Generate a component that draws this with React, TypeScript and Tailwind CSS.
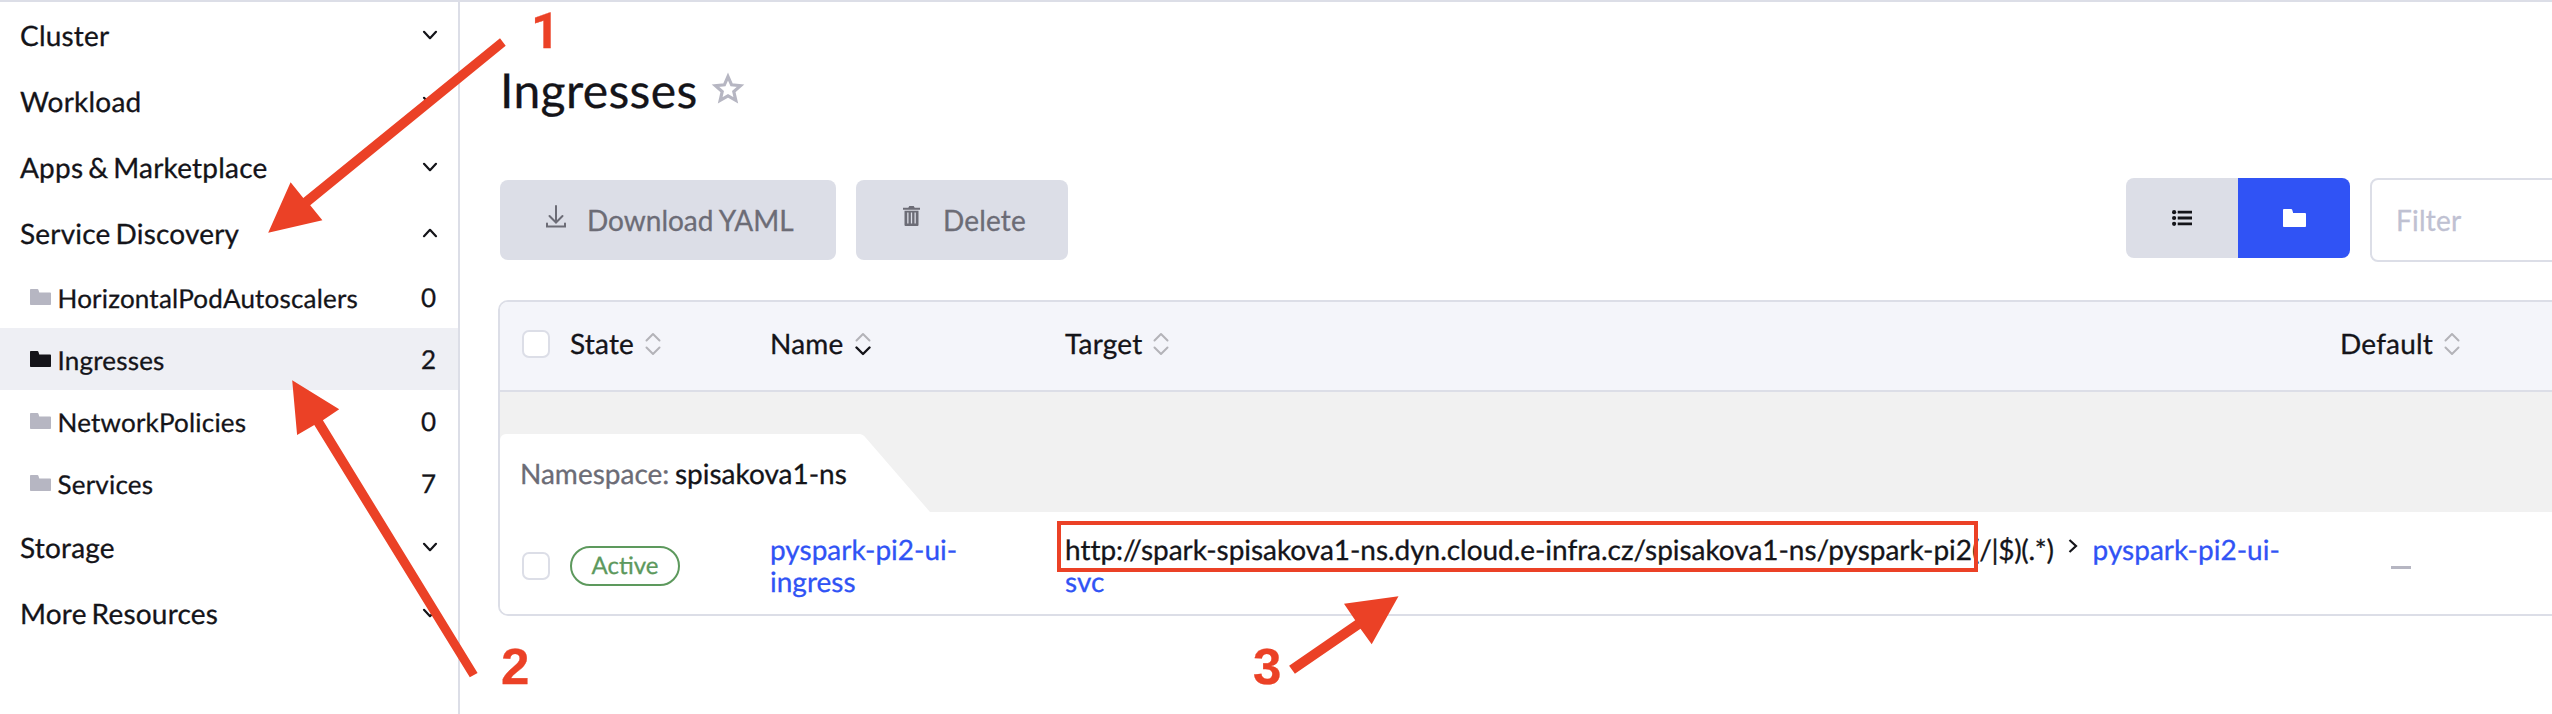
import React from "react";

type Group = {
  label: string;
  open?: boolean;
  children?: { label: string; count: number; active?: boolean }[];
};

const groups: Group[] = [
  { label: "Cluster" },
  { label: "Workload" },
  { label: "Apps & Marketplace" },
  {
    label: "Service Discovery",
    open: true,
    children: [
      { label: "HorizontalPodAutoscalers", count: 0 },
      { label: "Ingresses", count: 2, active: true },
      { label: "NetworkPolicies", count: 0 },
      { label: "Services", count: 7 },
    ],
  },
  { label: "Storage" },
  { label: "More Resources" },
];

function Chevron({ up = false, className = "" }: { up?: boolean; className?: string }) {
  return (
    <svg
      className={className}
      width="16"
      height="10"
      viewBox="0 0 16 10"
      fill="none"
      stroke="currentColor"
      strokeWidth="2.2"
      strokeLinecap="round"
      strokeLinejoin="round"
    >
      <path d={up ? "M2 8.2 8 1.8l6 6.4" : "M2 1.8 8 8.2l6-6.4"} />
    </svg>
  );
}

function Folder({ className = "" }: { className?: string }) {
  return (
    <svg className={className} viewBox="0 0 24 18" fill="currentColor" preserveAspectRatio="none">
      <path d="M1.2 0h7.2c.6 0 1 .3 1.2.8L10.6 4H22.8c.7 0 1.2.5 1.2 1.1v11.8c0 .6-.5 1.1-1.2 1.1H1.2C.5 18 0 17.5 0 16.900V1.100C0 .5.500 0 1.200 0Z" />
    </svg>
  );
}

function Sort({ desc = false }: { desc?: boolean }) {
  return (
    <svg
      width="16"
      height="24"
      viewBox="0 0 16 24"
      fill="none"
      strokeWidth="2"
      strokeLinecap="round"
      strokeLinejoin="round"
    >
      <path d="M1.500 8.500 8 2l6.500 6.500" stroke="#b3b3b8" />
      <path d="M1.500 15.500 8 22l6.500-6.500" stroke={desc ? "#141419" : "#b3b3b8"} strokeWidth={desc ? 2.400 : 2} />
    </svg>
  );
}

function Checkbox() {
  return <span className="block size-7 shrink-0 rounded-[7px] border-2 border-[#dcdee7] bg-white" />;
}

function Sidebar() {
  return (
    <nav className="w-[460px] shrink-0 border-r-2 border-[#dcdee7]">
      {groups.map((g) => (
        <div key={g.label}>
          <div className="flex h-[66px] items-center justify-between pr-5 pl-5">
            <span className="text-[28px] leading-8 tracking-[0.2px] [word-spacing:-2.4px]">{g.label}</span>
            <Chevron up={g.open} className="mb-px" />
          </div>
          {g.children?.map((c) => (
            <div
              key={c.label}
              className={
                c.active
                  ? "flex h-[62px] items-center bg-[#eeeff4] pr-[22px] pl-[30px]"
                  : "flex h-[62px] items-center pr-[22px] pl-[30px]"
              }
            >
              <Folder
                className={
                  c.active ? "mb-[1px] h-4 w-[21px] text-[#141419]" : "mb-[1px] h-4 w-[21px] text-[#b6b6c2]"
                }
              />
              <span className="ml-[6.5px] grow pt-[2px] text-[26px] leading-8 tracking-[0.2px]">{c.label}</span>
              <span className="text-[26px] leading-8">{c.count}</span>
            </div>
          ))}
        </div>
      ))}
    </nav>
  );
}

function Toolbar() {
  return (
    <div className="flex items-start">
      <button className="mt-[2px] ml-[2px] flex h-20 w-[336px] shrink-0 items-center rounded-lg bg-[#dcdee7] pl-[46px] text-[28px] whitespace-nowrap text-[#6c6c76]">
        <svg
          className="mb-[8px] shrink-0"
          width="20"
          height="23"
          viewBox="0 0 20 23"
          fill="none"
          stroke="currentColor"
          strokeWidth="2"
          strokeLinecap="round"
        >
          <path d="M10 1v16M3.500 11l6.500 6.500 6.500-6.500M1 18.500V21.500h18v-3" />
        </svg>
        <span className="ml-[21px] [word-spacing:-0.8px]">Download YAML</span>
      </button>
      <button className="mt-[2px] ml-5 flex h-20 w-[212px] shrink-0 items-center rounded-lg bg-[#dcdee7] pl-[47px] text-[28px] text-[#6c6c76]">
        <svg className="mb-[8px] shrink-0" width="17" height="20" viewBox="0 0 17 20" fill="currentColor">
          <path
            fillRule="evenodd"
            d="M6.300 0h4.400l1 1.800H17v2H0v-2h5.300ZM1.500 4.800h14V19q0 1-1 1h-12q-1 0-1-1ZM4.200 6.500v11h1.300v-11Zm3.650 0v11h1.300v-11Zm3.650 0v11h1.300v-11Z"
          />
        </svg>
        <span className="ml-[23px] tracking-[0.15px]">Delete</span>
      </button>
      <div className="ml-[1058px] flex h-20 shrink-0 overflow-hidden rounded-lg">
        <div className="flex w-28 items-center justify-center bg-[#dcdee7]">
          <svg width="20" height="16" viewBox="0 0 20 16" fill="#141419">
            <circle cx="2.100" cy="2.200" r="2.100" />
            <circle cx="2.100" cy="8" r="2.100" />
            <circle cx="2.100" cy="13.800" r="2.100" />
            <path d="M5.700.8H20v2.800H5.700ZM5.700 6.600H20v2.800H5.700ZM5.700 12.400H20v2.800H5.700Z" />
          </svg>
        </div>
        <div className="flex w-28 items-center justify-center bg-[#3053f5] text-white">
          <Folder className="h-[18px] w-[23px]" />
        </div>
      </div>
      <input
        className="ml-5 h-[84px] w-[400px] shrink-0 rounded-lg border-2 border-[#dcdee7] bg-white pl-6 text-[28px] tracking-[0.25px] placeholder:text-[#bfc1d2]"
        placeholder="Filter"
      />
    </div>
  );
}

function Heading({ label, desc }: { label: string; desc?: boolean }) {
  return (
    <div className="flex items-center gap-[11px]">
      <span className="pb-[2px] tracking-[0.2px]">{label}</span>
      <Sort desc={desc} />
    </div>
  );
}

const columns = "grid grid-cols-[50px_200px_295px_1275px_300px] pl-[20px]";

function Table() {
  return (
    <div className="mt-[38px] w-[2200px] rounded-[10px] border-2 border-[#dcdee7] text-[28px] leading-8">
      <div className={`${columns} h-[90px] items-center rounded-t-lg border-b-2 border-[#dcdee7] bg-[#f4f5fa] pb-1`}>
        <div className="pl-[2px]">
          <Checkbox />
        </div>
        <Heading label="State" />
        <Heading label="Name" desc />
        <Heading label="Target" />
        <Heading label="Default" />
      </div>
      <div className="relative h-[120px] bg-[#f1f1f1] pt-[42px]">
        <svg className="absolute top-[42px] left-0" width="430" height="78" viewBox="0 0 430 78" fill="#fff">
          <path d="M0 78V6a6 6 0 0 1 6-6h353q4 0 6.500 3.500L430 78Z" />
        </svg>
        <div className="relative flex h-[78px] items-center pb-px pl-5">
          <span className="whitespace-pre text-[#6c6c76] [word-spacing:-1.600px]">Namespace: </span>
          <span>spisakova1-ns</span>
        </div>
      </div>
      <div className={`${columns} h-[102px] rounded-b-lg bg-white`}>
        <div className="pt-10 pl-[2px]">
          <Checkbox />
        </div>
        <div className="pt-[34px]">
          <span className="flex h-10 w-[110px] items-center justify-center rounded-full border-2 border-[#5d995d] pb-px text-[24px] text-[#5d995d]">
            Active
          </span>
        </div>
        <div className="w-[200px] pt-[21px] text-[#3053f5]">pyspark-pi2-ui-ingress</div>
        <div className="pt-[21px]">
          <div className="flex items-center">
            <span className="tracking-[-0.04px]">
              http://spark-spisakova1-ns.dyn.cloud.e-infra.cz/spisakova1-ns/pyspark-pi2
            </span>
            <span className="tracking-[-0.3px]">(/|$)(.*)</span>
            <svg
              className="mr-[15px] mb-[7px] ml-3.5"
              width="10"
              height="14"
              viewBox="0 0 10 14"
              fill="none"
              stroke="#141419"
              strokeWidth="2.200"
            >
              <path d="M1.500 1 8 7l-6.500 6" />
            </svg>
            <span className="text-[#3053f5]">pyspark-pi2-ui-</span>
          </div>
          <div className="text-[#3053f5]">svc</div>
        </div>
        <div className="pt-[54px] pl-[51px]">
          <div className="h-[3px] w-5 bg-[#b6b6c2]" />
        </div>
      </div>
    </div>
  );
}

function Annotations() {
  return (
    <div className="pointer-events-none absolute inset-0 text-[#eb4126]">
      <svg className="absolute inset-0" width="2552" height="714" viewBox="0 0 2552 714" fill="currentColor">
        <path d="M268.200 232.700 290.600 182.300 303.300 198 500 38.300 505.700 45.700 310.200 205.300 322.400 220.300Z" />
        <path d="M292.200 380.300 339.200 409.300 322.900 420.300 477.600 673 469.800 677.300 314.300 425 297.100 435Z" />
        <path d="M1398.500 596.300 1371.700 644.300 1360.500 628.700 1294.900 673.700 1289.100 665.700 1355.200 620.300 1344 603.700Z" />
      </svg>
      <div className="absolute top-[521px] left-[1057px] h-[51px] w-[921px] border-4 border-current" />
      <span className="absolute top-[2px] left-[531px] font-[Roboto] text-[50px] leading-[60px] font-bold">1</span>
      <span className="absolute top-[637px] left-[501px] font-['Liberation_Sans'] text-[51px] leading-[60px] font-bold">2</span>
      <span className="absolute top-[637px] left-[1253px] font-['Liberation_Sans'] text-[51px] leading-[60px] font-bold">3</span>
    </div>
  );
}

export default function App() {
  return (
    <div className="relative flex h-[714px] w-[2552px] overflow-hidden border-t-2 border-[#dcdee7] bg-white font-[Lato,sans-serif] text-[#141419] [text-rendering:geometricPrecision] [-webkit-text-stroke:0.3px]">
      <Sidebar />
      <main className="w-[2092px] shrink-0 overflow-hidden pl-[38px]">
        <header className="flex h-[176px] items-start pt-[60px] pl-[2px]">
          <h1 className="text-[48px] leading-[58px] tracking-[0.36px]">Ingresses</h1>
          <svg
            className="mt-[10px] ml-[13px]"
            width="34"
            height="33"
            viewBox="0 0 34 33"
            fill="none"
            stroke="#b6b6c2"
            strokeWidth="3.200"
          >
            <path d="M17 4.600 20.600 12.800 29.500 13.700 22.800 19.600 24.800 28.300 17 23.800 9.200 28.300 11.200 19.600 4.500 13.700 13.400 12.800Z" />
          </svg>
        </header>
        <Toolbar />
        <Table />
      </main>
      <div className="absolute -top-[2px] left-0 h-[714px] w-[2552px]">
        <Annotations />
      </div>
    </div>
  );
}
